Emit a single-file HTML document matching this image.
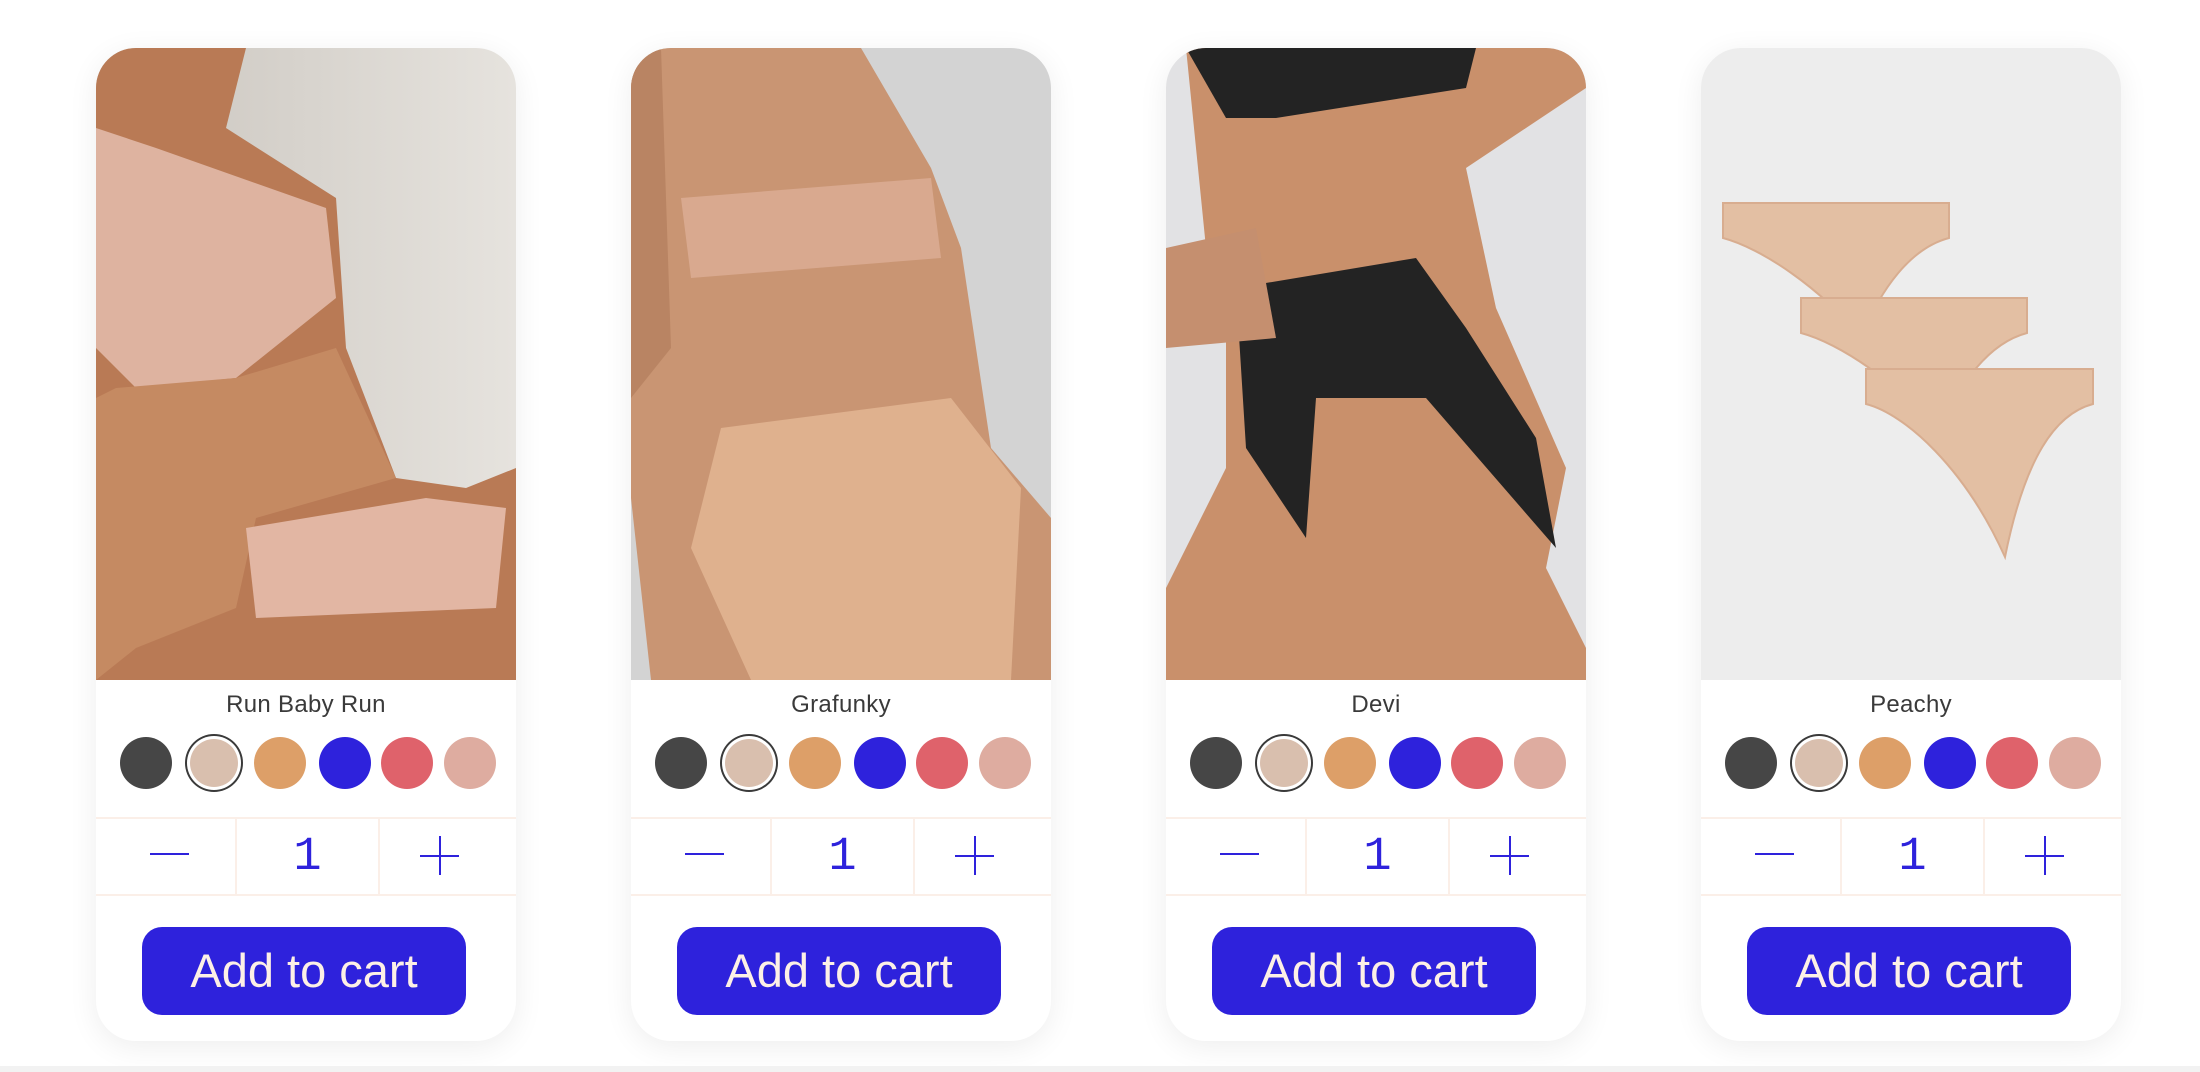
<!DOCTYPE html>
<html><head><meta charset="utf-8"><style>
html,body{margin:0;padding:0;background:#fff;width:2200px;height:1072px;overflow:hidden;font-family:"Liberation Sans",sans-serif}
.strip{position:absolute;left:0;top:1066px;width:2200px;height:6px;background:#f2f2f2}
.card{position:absolute;top:48px;width:420px;height:993px;background:#fff;border-radius:40px;overflow:hidden;box-shadow:0 6px 30px rgba(0,0,0,0.07)}
.img{position:absolute;left:0;top:0;width:420px;height:632px}
.name{position:absolute;top:643px;left:0;width:420px;text-align:center;font-size:24px;color:#3a3a3a;letter-spacing:0.3px}
.sw{position:absolute;top:689px;width:52px;height:52px;border-radius:50%}
.sel{box-shadow:0 0 0 3px #fff,0 0 0 5px #3a3a3a;width:48px;height:48px;top:691px}
.qty{position:absolute;top:769px;left:0;width:420px;height:79px;border-top:2px solid #fbefe8;border-bottom:2px solid #fbefe8;box-sizing:border-box}
.qty .d{position:absolute;top:0;width:2px;height:77px;background:#fbefe8}
.minus{position:absolute;left:54px;top:34px;width:39px;height:2px;background:#2e22dc}
.plus1{position:absolute;left:324px;top:36px;width:39px;height:2px;background:#2e22dc}
.plus2{position:absolute;left:343px;top:17px;width:2px;height:39px;background:#2e22dc}
.one{position:absolute;left:140px;width:143px;top:12px;text-align:center;font-family:"Liberation Mono",monospace;font-size:47px;color:#2e22dc}
.btn{position:absolute;left:46px;top:879px;width:324px;height:88px;border-radius:20px;background:#2e22dc;color:#fdf0e6;font-size:47px;text-align:center;line-height:88px}
</style></head><body>

<div class="card" style="left:96px">
<svg class="img" viewBox="0 0 420 632"><defs><linearGradient id="b1" x1="0" x2="1"><stop offset="0" stop-color="#c9c4bd"/><stop offset="1" stop-color="#e6e3de"/></linearGradient></defs>
<rect width="420" height="632" fill="url(#b1)"/>
<path d="M0 0H150L130 80 240 150 250 300 300 430 370 440 420 420V632H0Z" fill="#b97a55"/>
<path d="M0 80 60 100 230 160 240 250 140 330 40 340 0 300Z" fill="#deb3a0"/>
<path d="M20 340 140 330 240 300 300 430 160 470 140 560 40 600 0 632 0 350Z" fill="#c58a62"/>
<path d="M150 480 330 450 410 460 400 560 160 570Z" fill="#e2b6a3"/>
</svg>
<div class="name">Run Baby Run</div>
<div class="sw" style="left:24px;background:#464646"></div><div class="sw sel" style="left:94px;background:#d9bfae"></div><div class="sw" style="left:158px;background:#dd9f68"></div><div class="sw" style="left:223px;background:#2e22dc"></div><div class="sw" style="left:285px;background:#df626b"></div><div class="sw" style="left:348px;background:#deaca0"></div>
<div class="qty"><div class="d" style="left:139px"></div><div class="d" style="left:282px"></div><div class="minus"></div><div class="one">1</div><div class="plus1"></div><div class="plus2"></div></div>
<div class="btn">Add to cart</div>
</div>

<div class="card" style="left:631px">
<svg class="img" viewBox="0 0 420 632"><rect width="420" height="632" fill="#d3d3d3"/>
<path d="M0 0H230L300 120 330 200 360 400 420 470V632H20L0 450Z" fill="#c99573"/>
<path d="M50 150 300 130 310 210 60 230Z" fill="#d9a98f"/>
<path d="M90 380 320 350 390 440 380 632 120 632 60 500Z" fill="#dfb18e"/>
<path d="M0 0 30 0 40 300 0 350Z" fill="#b98463"/>
</svg>
<div class="name">Grafunky</div>
<div class="sw" style="left:24px;background:#464646"></div><div class="sw sel" style="left:94px;background:#d9bfae"></div><div class="sw" style="left:158px;background:#dd9f68"></div><div class="sw" style="left:223px;background:#2e22dc"></div><div class="sw" style="left:285px;background:#df626b"></div><div class="sw" style="left:348px;background:#deaca0"></div>
<div class="qty"><div class="d" style="left:139px"></div><div class="d" style="left:282px"></div><div class="minus"></div><div class="one">1</div><div class="plus1"></div><div class="plus2"></div></div>
<div class="btn">Add to cart</div>
</div>

<div class="card" style="left:1166px">
<svg class="img" viewBox="0 0 420 632"><rect width="420" height="632" fill="#e2e2e4"/>
<path d="M20 0H420V40L300 120 330 260 400 420 380 520 420 600V632H0V540L60 420 60 240 40 200Z" fill="#c9906b"/>
<path d="M20 0H310L300 40 110 70 60 70Z" fill="#232323"/>
<path d="M70 240 250 210 300 280 370 390 390 500 260 350 150 350 140 490 80 400Z" fill="#232323"/>
<path d="M0 200 90 180 110 290 0 300Z" fill="#c58f6f"/>
</svg>
<div class="name">Devi</div>
<div class="sw" style="left:24px;background:#464646"></div><div class="sw sel" style="left:94px;background:#d9bfae"></div><div class="sw" style="left:158px;background:#dd9f68"></div><div class="sw" style="left:223px;background:#2e22dc"></div><div class="sw" style="left:285px;background:#df626b"></div><div class="sw" style="left:348px;background:#deaca0"></div>
<div class="qty"><div class="d" style="left:139px"></div><div class="d" style="left:282px"></div><div class="minus"></div><div class="one">1</div><div class="plus1"></div><div class="plus2"></div></div>
<div class="btn">Add to cart</div>
</div>

<div class="card" style="left:1701px">
<svg class="img" viewBox="0 0 420 632"><rect width="420" height="632" fill="#ededed"/>
<g fill="#e3bfa3" stroke="#d8ad90" stroke-width="2">
<path d="M22 155H248V190C210 200 180 240 160 290 120 240 60 200 22 190Z"/>
<path d="M100 250H326V285C288 295 258 335 238 385 198 335 138 295 100 285Z"/>
<path d="M165 321H392V356C354 366 324 410 304 509 264 420 204 366 165 356Z"/>
</g></svg>
<div class="name">Peachy</div>
<div class="sw" style="left:24px;background:#464646"></div><div class="sw sel" style="left:94px;background:#d9bfae"></div><div class="sw" style="left:158px;background:#dd9f68"></div><div class="sw" style="left:223px;background:#2e22dc"></div><div class="sw" style="left:285px;background:#df626b"></div><div class="sw" style="left:348px;background:#deaca0"></div>
<div class="qty"><div class="d" style="left:139px"></div><div class="d" style="left:282px"></div><div class="minus"></div><div class="one">1</div><div class="plus1"></div><div class="plus2"></div></div>
<div class="btn">Add to cart</div>
</div>

<div class="strip"></div>
</body></html>
